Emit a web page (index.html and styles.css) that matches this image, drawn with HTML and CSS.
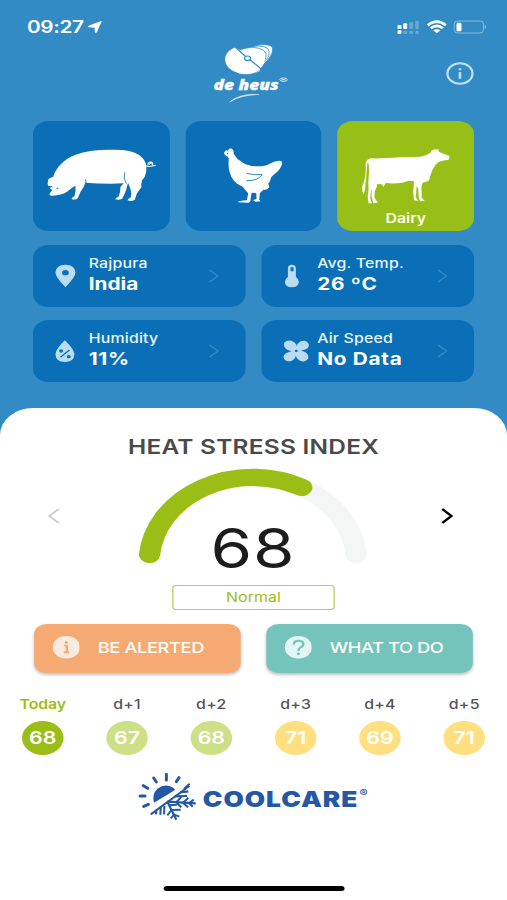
FILE: index.html
```html
<!DOCTYPE html>
<html lang="en">
<head>
<meta charset="utf-8">
<title>Heat Stress Index</title>
<link rel="stylesheet" href="styles.css">
</head>
<body>
<div class="app">
  <header class="top">
    <div class="status">
      <div class="status-left">
        <span class="clock">09:27</span>
        <svg class="loc" viewBox="0 0 42 36" preserveAspectRatio="none"><path d="M40 1 2 15Q0 18 4 18L21 19 22 34Q24 37 26 33Z" fill="#fff" stroke="#fff" stroke-width="2"/></svg>
      </div>
      <svg class="status-icons" viewBox="1190 55 276 48" preserveAspectRatio="none">
        <g fill="#fff">
          <rect x="1195" y="73" width="12" height="12" rx="3"/><rect x="1195" y="89" width="12" height="11" rx="4"/>
          <rect x="1212" y="68" width="12" height="17" rx="3"/>
          <g opacity=".25"><rect x="1212" y="90" width="12" height="10" rx="4"/><rect x="1230" y="64" width="12" height="21" rx="3"/><rect x="1230" y="90" width="12" height="10" rx="4"/><rect x="1248" y="60" width="11" height="25" rx="3"/><rect x="1248" y="90" width="11" height="10" rx="4"/></g>
          <path d="M1302 89Q1313 82 1324 89L1313 98Z"/>
          <rect x="1372" y="66" width="15" height="26" rx="4"/>
        </g>
        <g fill="none" stroke="#fff">
          <path d="M1286 74Q1313 52 1340 74M1295 83Q1313 68 1331 83" stroke-width="8"/>
          <rect x="1365" y="61" width="88" height="36" rx="10" stroke-width="2.5" opacity=".5"/>
        </g>
        <path d="M1457 72Q1464 79 1457 86Z" fill="#fff" opacity=".5"/>
      </svg>
    </div>
    <div class="brand-row">
      <svg class="brand" viewBox="210 42 82 64" preserveAspectRatio="none">
        <g fill="#fff" stroke="#328bc4" stroke-width=".8">
          <path d="M247 50C254 44 268 43 272 47C274 52 270 58 262 66Z"/>
          <path d="M243 50C252 45 264 45 268 49C271 55 267 60 259 67Z"/>
          <path d="M240 50C250 46 261 47 265 52C268 57 264 62 257 69Z"/>
        </g>
        <path d="M235 47.500C222 52 222 65 233 71Q246 78 260 71L260 69Q268 60 263 54Q256 47 240 50Z" fill="#fff"/>
        <path d="M235 47 246 57M249 59 261 69" stroke="#328bc4" stroke-width="1.200" fill="none"/>
        <ellipse cx="247.500" cy="58.300" rx="3" ry="2.300" fill="#fff" stroke="#328bc4" stroke-width="1.200"/>
        <path d="M240 74Q253 76 260 70" stroke="#328bc4" stroke-width=".6" fill="none"/>
        <text class="brand-text" x="213.500" y="90" textLength="65" lengthAdjust="spacingAndGlyphs">de heus</text>
        <ellipse cx="283.500" cy="79.700" rx="3.800" ry="1.700" fill="none" stroke="#fff" stroke-width="1" opacity=".75"/><path d="M281.500 79.700h4" stroke="#fff" stroke-width=".8"/>
        <path d="M229.500 102Q240 93 259 94.500Q240 95 229.500 102Z" fill="#fff" stroke="#fff" stroke-width=".5" opacity=".85"/>
      </svg>
      <svg class="info" viewBox="0 0 24 24"><circle cx="12" cy="12" r="10.700" fill="none" stroke="#c3e1f6" stroke-width="1.900"/><path d="M12 10.500v7M12 6.500v2" stroke="#c3e1f6" stroke-width="2.200" fill="none"/></svg>
    </div>
    <div class="animals">
      <div class="tile">
        <svg class="pig" viewBox="62 118 332 158" preserveAspectRatio="none">
          <path d="M68 209Q71 204 82 202C90 176 113 148 150 135Q190 121 250 120.500Q315 118 340 136Q360 151 362 170Q363 187 357 201L349 212Q345 223 347 233Q341 240 333 252L327 270Q318 276 305 272Q306 267 316 262Q318 250 314 237L307 220L304 228Q303 242 289 267Q281 272 268 269Q269 264 278 261Q285 246 284 232L294 221Q240 224 179 219Q175 232 164 247L156 266Q148 272 137 268Q138 263 146 260Q151 246 149 228Q137 234 126 245Q106 259 76 258Q69 257 72 251L80 241L72 236Q76 231 82 230L67 229Q64 220 68 209Z" fill="#fff"/>
          <path d="M360 169Q374 172 390 167M367 167Q366 157 375 157Q384 158 379 167M371 166Q371 159 378 162" fill="none" stroke="#fff" stroke-width="3"/>
          <path d="M179 209Q183 215 178 224M297 188Q291 207 302 222" fill="none" stroke="#0a6fb7" stroke-width="2.500"/><ellipse cx="95" cy="236" rx="3" ry="2" fill="#0a6fb7"/>
        </svg>
      </div>
      <div class="tile">
        <svg class="hen" viewBox="134 115 177 168" preserveAspectRatio="none">
          <path d="M135 131Q139 119 147 123Q149 114 159 117Q166 121 164 132Q173 148 190 158Q205 169 231 170Q257 171 272 162Q290 152 304 153Q314 157 307 169Q302 183 286 194Q276 202 275 208Q274 217 268 220L271 231Q269 241 254 240Q248 245 243 250L241 270L245 275L230 276L222 271L233 268L232 250L218 249L215 269Q216 278 208 279L176 278Q180 273 204 272L208 251Q198 241 192 232Q160 219 152 187Q147 167 150 147Q146 140 143 139L139 137Z" fill="#fff"/>
          <path d="M204 191Q225 197 250 195Q237 214 203 213" fill="none" stroke="#0a6fb7" stroke-width="2.500"/><circle cx="146" cy="131" r="2" fill="#0a6fb7"/>
        </svg>
      </div>
      <div class="tile active">
        <svg class="cow" viewBox="95 113 266 168" preserveAspectRatio="none">
          <path d="M107 160Q109 147 122 144Q160 145 212 141L272 139Q289 137 304 125Q301 119 309 120L314 116L321 118L325 116L327 124L337 129L358 137Q362 143 355 148L337 151Q323 154 316 164Q306 178 301 196Q299 212 289 214L278 217L274 232Q276 245 275 262L284 271L270 273L266 258L265 235L260 226L259 245L257 261L265 271L252 270L250 245L252 213Q239 208 218 217Q190 221 167 218L163 225L160 231L157 222L142 221L140 230Q132 242 134 263L144 277L130 279L125 258L125 237L123 242L121 265L126 279L116 279L113 258Q117 240 115 218L117 186Q118 167 114 154Q110 164 111 184Q111 204 106 220Q107 240 101 252Q94 240 98 225L103 211Q109 190 107 160Z" fill="#fff"/>
          <path d="M114 163Q110 186 110 206" stroke="#98bf18" stroke-width="2" fill="none"/>
        </svg>
        <span class="tile-label">Dairy</span>
      </div>
    </div>
    <div class="metrics">
      <div class="metric">
        <svg class="m-icon" viewBox="0 0 90 72" preserveAspectRatio="none"><path d="M35 70Q4 38 5 25Q7 2 35 2Q63 2 65 25Q66 38 35 70ZM35 18A10 8 0 1 0 35 34A10 8 0 1 0 35 18Z" fill="#badcf2" fill-rule="evenodd"/></svg>
        <div class="m-text"><span class="m-name">Rajpura</span><b class="m-value">India</b></div>
        <svg class="chev" viewBox="0 0 10 14"><path d="M1.500 1 8.500 7 1.500 13"/></svg>
      </div>
      <div class="metric">
        <svg class="m-icon" viewBox="0 0 90 72" preserveAspectRatio="none"><path d="M17 39V14Q17 2 29 2Q41 2 41 14V39Q50 45 50 54Q48 70 29 70Q9 70 8 54Q8 45 17 39ZM25 10V22H34V10Z" fill="#badcf2" fill-rule="evenodd"/></svg>
        <div class="m-text"><span class="m-name">Avg. Temp.</span><b class="m-value wide">26 ºC</b></div>
        <svg class="chev" viewBox="0 0 10 14"><path d="M1.500 1 8.500 7 1.500 13"/></svg>
      </div>
      <div class="metric">
        <svg class="m-icon" viewBox="0 0 90 72" preserveAspectRatio="none"><path d="M33 4Q61 31 62 45Q61 69 33 69Q6 69 5 45Q6 31 33 4Z" fill="#badcf2"/><path d="M20 55 47 33" stroke="#0a6fb7" stroke-width="4"/><ellipse cx="22" cy="36" rx="6" ry="5" fill="#0a6fb7"/><ellipse cx="45" cy="53" rx="6" ry="5" fill="#0a6fb7"/></svg>
        <div class="m-text"><span class="m-name">Humidity</span><b class="m-value wide">11%</b></div>
        <svg class="chev" viewBox="0 0 10 14"><path d="M1.500 1 8.500 7 1.500 13"/></svg>
      </div>
      <div class="metric">
        <svg class="m-icon" viewBox="0 0 90 72" preserveAspectRatio="none"><g fill="#badcf2"><path d="M42 36Q33 40 16 33Q2 24 6 11Q14 2 27 5Q40 10 44 20Q45 28 42 36Z"/><path d="M42 36Q39 28 46 15Q53 4 67 5Q80 9 80 20Q77 31 62 33Q52 39 42 36Z"/><path d="M42 36Q51 32 68 39Q80 46 78 58Q72 69 58 67Q46 64 41 52Q39 44 42 36Z"/><path d="M42 36Q45 44 38 57Q31 68 17 67Q5 64 4 53Q6 42 21 39Q32 33 42 36Z"/></g><ellipse cx="42" cy="36" rx="4.500" ry="3.500" fill="#0a6fb7"/></svg>
        <div class="m-text"><span class="m-name">Air Speed</span><b class="m-value wide">No Data</b></div>
        <svg class="chev" viewBox="0 0 10 14"><path d="M1.500 1 8.500 7 1.500 13"/></svg>
      </div>
    </div>
  </header>

  <main class="sheet">
    <h1 class="title">HEAT STRESS INDEX</h1>
    <div class="gauge-row">
      <svg class="arrow prev" viewBox="0 0 10 16"><path d="M9 1 1.500 8 9 15"/></svg>
      <div class="gauge">
        <svg viewBox="0 0 190 97"><g fill="none" stroke-width="17.400" stroke-linecap="round"><path d="M135 19.400A85 85 0 0 1 179.600 86.500" stroke="#f4f5f5"/><path d="M10.400 86.500A85 85 0 0 1 135 19.400" stroke="#9bbe17"/></g></svg>
        <span class="score">68</span>
      </div>
      <svg class="arrow next" viewBox="0 0 10 16"><path d="M1 1 8.500 8 1 15"/></svg>
    </div>
    <div class="level">Normal</div>
    <div class="actions">
      <div class="btn alert"><svg class="b-icon" viewBox="0 0 24 24"><circle cx="12" cy="12" r="12" fill="#fdeadf"/><path d="M10 10.200H12.500V17M9.800 17.300h4.700" stroke="#f5aa73" stroke-width="2" fill="none"/><circle cx="12" cy="6.800" r="1.400" fill="#f5aa73"/></svg><span>BE ALERTED</span></div>
      <div class="btn todo"><svg class="b-icon" viewBox="0 0 24 24"><circle cx="12" cy="12" r="12" fill="#e3f5f4"/><path d="M8 9Q8 5 12 5Q16.300 5 16.300 8.700Q16.300 11 13.500 12.500Q12 13.500 12 16" stroke="#75c4bb" stroke-width="2.100" fill="none"/><circle cx="12" cy="19" r="1.400" fill="#75c4bb"/></svg><span>WHAT TO DO</span></div>
    </div>
    <div class="days">
      <div class="day today"><span>Today</span><b>68</b></div>
      <div class="day mild"><span>d+1</span><b>67</b></div>
      <div class="day mild"><span>d+2</span><b>68</b></div>
      <div class="day warm"><span>d+3</span><b>71</b></div>
      <div class="day warm"><span>d+4</span><b>69</b></div>
      <div class="day warm"><span>d+5</span><b>71</b></div>
    </div>
    <div class="coolcare">
      <svg class="cc-icon" viewBox="40 28 176 143" preserveAspectRatio="none">
        <path d="M88 117Q81 91 98 75Q121 58 143 71Q149 75 151 79Z" fill="#2458a6"/>
        <g stroke="#2458a6" fill="none">
          <path d="M125 32V49M87 43 95 55M163 42 155 54M56 66 69 74M46 97H61M57 128 71 122" stroke-width="9" stroke-linecap="round"/>
          <path d="M78 152 194 67" stroke-width="6"/>
          <path d="M128 114 155 168M128 114 213 119M108 130 107 153M95 140 94 152M150 98 187 97M166 86 191 83M178 76 195 60" stroke-width="6.500"/>
          <path d="M119 126 118 152M133 125 156 123M140 139 128 155M140 139 168 138M148 153 138 164M148 153 164 159M154 116 170 100M154 116 170 131M175 117 191 102M175 117 190 131M193 118 207 108M193 118 204 129" stroke-width="6"/>
        </g>
      </svg>
      <span class="cc-name">COOLCARE</span><span class="cc-reg">®</span>
    </div>
    <div class="home"></div>
  </main>
</div>
</body>
</html>
```
FILE: styles.css
```css
* { box-sizing: border-box; }
body { margin: 0; overflow: hidden; background: #fff; }
svg { display: block; flex: none; }

.app {
  width: 415px; height: 900px;
  transform: scaleX(1.22169); transform-origin: 0 0;
  font-family: Inter, "Liberation Sans", sans-serif;
  background: #328bc4;
  display: flex; flex-direction: column;
}
.top { height: 408px; padding: 0 27px; flex: none; }

.status { height: 42px; padding-top: 11px; margin: 0 -11.500px 0 -5px; display: flex; justify-content: space-between; align-items: center; color: #fff; }
.status-left { display: flex; align-items: center; gap: 4px; }
.clock { font-size: 17px; font-weight: 600; letter-spacing: -.3px; line-height: 20px; }
.loc { width: 11.500px; height: 12px; }
.status-icons { width: 75.300px; height: 16px; }

.brand-row { height: 78.500px; display: flex; justify-content: flex-end; align-items: flex-start; }
.brand { width: 67.100px; height: 64px; margin-right: 126px; }
.brand-text { font: italic 800 14px "Open Sans", sans-serif; fill: #fff; stroke: #fff; stroke-width: .3px; }
.info { width: 23px; height: 23px; margin: 20px 0 0; }

.animals { display: grid; grid-template-columns: repeat(3, 1fr); gap: 13px; }
.tile { height: 110.500px; border-radius: 13px; background: #0a6fb7; display: flex; align-items: center; justify-content: center; position: relative; }
.tile.active { background: #98bf18; }
.pig { width: 90.600px; height: 52.700px; }
.hen { width: 48.300px; height: 56px; }
.cow { width: 72.600px; height: 56px; }
.tile-label { position: absolute; left: 0; right: 0; bottom: 4px; text-align: center; color: #f8ffe6; font-size: 13px; line-height: 18px; font-weight: 600; letter-spacing: 0; }

.metrics { display: grid; grid-template-columns: 1fr 1fr; gap: 13.500px 13px; margin-top: 14px; }
.metric { height: 61.500px; border-radius: 13px; background: #0a6fb7; display: flex; align-items: center; padding: 0 21px 0 17px; color: #fff; }
.m-icon { width: 24.600px; height: 24px; margin-right: 4px; }
.m-text { display: flex; flex-direction: column; flex: 1; padding-bottom: 2px; white-space: nowrap; }
.m-name { font-size: 13px; line-height: 19px; font-weight: 500; letter-spacing: .15px; color: #e8f5ff; }
.m-value { font-size: 17px; line-height: 22px; font-weight: 700; letter-spacing: 0; }
.m-value.wide { letter-spacing: .6px; }
.chev { width: 10px; height: 14px; fill: none; stroke: #3189c7; stroke-width: 1.300; }

.sheet { height: 492px; flex: none; background: #fff; border-radius: 27px 27px 0 0; padding: 28px 27px 0; display: flex; flex-direction: column; }
.title { margin: 0; text-align: center; font-size: 20px; line-height: 22px; font-weight: 600; letter-spacing: .2px; color: #4a4a4a; }
.gauge-row { height: 110px; margin-top: 10px; display: flex; justify-content: space-between; padding: 0 17px 0 12px; }
.arrow { width: 10px; height: 16px; margin-top: 40px; fill: none; }
.prev { stroke: #c9c9c9; stroke-width: 1.700; }
.next { stroke: #000; stroke-width: 2.200; }
.gauge { width: 190px; position: relative; margin-left: 4px; }
.gauge svg { width: 190px; height: 97px; }
.score { position: absolute; left: 0; right: 0; top: 50px; text-align: center; font-size: 55px; line-height: 60px; font-weight: 400; letter-spacing: .6px; color: #1c1c1c; }
.level { align-self: center; width: 133px; height: 25px; margin-top: 7px; border: 1.500px solid #b5ce55; border-radius: 3px; color: #9bbe17; font-size: 13px; line-height: 23px; text-align: center; letter-spacing: .1px; }

.actions { display: flex; justify-content: space-between; margin: 13.500px 1px 0; }
.btn { width: 169px; height: 49px; border-radius: 10px; display: flex; align-items: center; padding: 0 0 1px 14.500px; color: #fff; font-size: 15px; font-weight: 500; letter-spacing: -.35px; box-shadow: 0 2px 3px rgba(0, 0, 0, .25); }
.btn span { flex: 1; padding-left: 15px; white-space: nowrap; }
.alert { background: #f5aa73; }
.todo { background: #75c4bb; }
.b-icon { width: 22.500px; height: 22.500px; }

.days { display: flex; justify-content: space-between; margin: 22px -11px 0; }
.day { width: 38px; display: flex; flex-direction: column; align-items: center; gap: 8.500px; color: #555; font-size: 13px; line-height: 18px; font-weight: 500; letter-spacing: .2px; }
.day b { width: 34px; height: 34px; border-radius: 50%; line-height: 34px; text-align: center; color: #fff; font-size: 17.500px; font-weight: 600; letter-spacing: 0; }
.today { color: #9bbe17; letter-spacing: -.1px; font-weight: 600; }
.today b { background: #9bbe17; }
.mild b { background: #cddf87; }
.warm b { background: #ffdf7f; }

.coolcare { display: flex; align-items: center; height: 48px; margin: 18px 0 0 86px; color: #2458a6; }
.cc-icon { width: 48px; height: 47.700px; }
.cc-name { font-size: 21.500px; font-weight: 900; line-height: 24px; margin: 4px 0 0 5px; letter-spacing: .8px; }
.cc-reg { font-size: 10px; font-weight: 700; align-self: flex-start; margin: 14px 0 0 1px; }
.home { width: 148px; height: 5px; border-radius: 3px; background: #000; align-self: center; margin-top: 65px; }
```
